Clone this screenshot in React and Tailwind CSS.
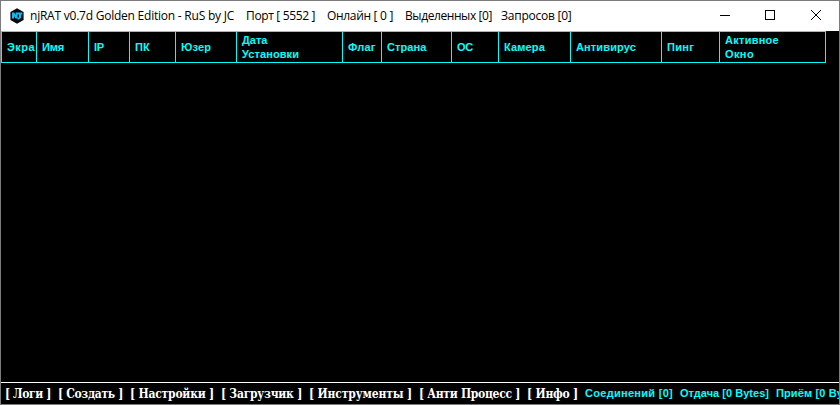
import { useLayoutEffect, useRef } from "react";

// Text run whose tracking is adjusted so that it spans a given width.
function Fit({ text, width, className = "" }) {
  const ref = useRef(null);
  useLayoutEffect(() => {
    const el = ref.current;
    el.style.letterSpacing = "0px";
    const natural = el.getBoundingClientRect().width;
    el.style.letterSpacing = `${(width - natural) / text.length}px`;
  }, [text, width]);
  return (
    <span className={`block whitespace-pre ${className}`}>
      <span ref={ref} className="inline-block">{text}</span>
    </span>
  );
}

const columns = [
  { w: "w-[35px]", lines: [["Экра", 28]] },
  { w: "w-[52px]", lines: [["Имя", 22]] },
  { w: "w-[41px]", lines: [["IP", 10]] },
  { w: "w-[46px]", lines: [["ПК", 15]] },
  { w: "w-[61px]", lines: [["Юзер", 30]] },
  { w: "w-[106px]", lines: [["Дата", 25.5], ["Установки", 57]] },
  { w: "w-[39px]", lines: [["Флаг", 27.5]] },
  { w: "w-[70px]", lines: [["Страна", 39.5]] },
  { w: "w-[47px]", lines: [["ОС", 16]] },
  { w: "w-[72px]", lines: [["Камера", 41]] },
  { w: "w-[91px]", lines: [["Антивирус", 60]] },
  { w: "w-[58px]", lines: [["Пинг", 27]] },
  { w: "w-[106px]", lines: [["Активное", 54], ["Окно", 29]] },
];

const title = [
  ["njRAT v0.7d Golden Edition - RuS by JC", 204, "w-[216px]"],
  ["Порт [ 5552 ]", 69, "w-[81px]"],
  ["Онлайн [ 0 ]", 66, "w-[78px]"],
  ["Выделенных [0]", 87, "w-[96px]"],
  ["Запросов [0]", 70.5, "w-[80px]"],
];

const menu = [
  ["[ Логи ]", 46, "w-[53px]"],
  ["[ Создать ]", 65, "w-[72px]"],
  ["[ Настройки ]", 84, "w-[91px]"],
  ["[ Загрузчик ]", 81, "w-[88px]"],
  ["[ Инструменты ]", 103, "w-[110px]"],
  ["[ Анти Процесс ]", 101, "w-[108px]"],
  ["[ Инфо ]", 51, "w-[58px]"],
];

const stats = [
  ["Соединений [0]", 88, "w-[95px]"],
  ["Отдача [0 Bytes]", 89, "w-[96px]"],
  ["Приём [0 Bytes]", 87, "w-[87px]"],
];

function Logo() {
  return (
    <svg width="16" height="16" viewBox="0 0 16 16" className="shrink-0">
      <path d="M8 0.3 14.6 4v8L8 15.7 1.4 12V4Z" fill="#050a0f" />
      <path d="M3 4.5H5.2L6.8 7V4.5H13.3V6.6H12.2V9.5L10 11.5H8.6V9.6H10V6.6H8.6V10.6H6.6L5 8.2V10.6H3Z" fill="#12b8ee" />
    </svg>
  );
}

export default function App() {
  return (
    <div className="flex h-[405px] w-[840px] flex-col overflow-hidden border border-[#7c7c7c] bg-black">
      <header className="flex h-[30px] shrink-0 items-center bg-white pl-2 font-['Open_Sans','Noto_Sans',sans-serif] text-[12px] leading-[16px] text-black">
        <Logo />
        <div className="flex pl-[5px]">
          {title.map(([text, width, w]) => (
            <Fit key={text} text={text} width={width} className={`shrink-0 ${w}`} />
          ))}
        </div>
        <div className="ml-auto flex shrink-0 items-center">
          <svg width="138" height="30" viewBox="0 0 138 30" fill="none" stroke="black" shapeRendering="crispEdges">
            <path d="M19 14.5H29" />
            <rect x="64.5" y="9.5" width="9" height="9" />
            <path d="M110 9 120 19M120 9 110 19" shapeRendering="auto" />
          </svg>
        </div>
      </header>

      <div className="flex h-8 w-[825px] shrink-0 border-y border-l border-[#00ffff] font-['Liberation_Sans',sans-serif] text-[11px] font-bold leading-[14px] text-[#00ffff]">
        {columns.map(({ w, lines }) => (
          <div key={lines[0][0]} className={`flex shrink-0 flex-col justify-center border-r border-[#00ffff] pl-[5px] ${w}`}>
            {lines.map(([text, width]) => (
              <Fit key={text} text={text} width={width} />
            ))}
          </div>
        ))}
      </div>

      <main className="flex-1" />

      <footer className="flex h-[22px] shrink-0 items-center overflow-hidden border-t border-white pl-1">
        <div className="flex shrink-0 font-['DejaVu_Serif_Condensed','DejaVu_Serif',serif] text-[12px] font-bold leading-[18px] text-white [font-stretch:semi-condensed]">
          {menu.map(([text, width, w]) => (
            <Fit key={text} text={text} width={width} className={`shrink-0 ${w}`} />
          ))}
        </div>
        <div className="flex shrink-0 pb-[2px] font-['Liberation_Sans',sans-serif] text-[11px] font-bold leading-[14px] text-[#00ffff]">
          {stats.map(([text, width, w]) => (
            <Fit key={text} text={text} width={width} className={`shrink-0 ${w}`} />
          ))}
        </div>
      </footer>
    </div>
  );
}
